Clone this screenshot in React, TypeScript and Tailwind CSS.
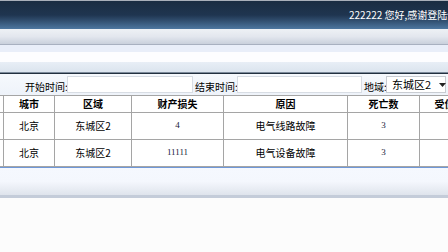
import React from "react";

const font = { fontFamily: '"Noto Sans CJK SC","DejaVu Sans",sans-serif' };

export default function App() {
  const rows = [
    { city: "北京", area: "东城区2", loss: "4", reason: "电气线路故障", dead: "3" },
    { city: "北京", area: "东城区2", loss: "11111", reason: "电气设备故障", dead: "3" },
  ];
  const widths = [25, 51, 77, 92, 124, 72, 60];
  return (
    <div className="w-[448px] h-[252px] overflow-hidden bg-[#fcfcfc] text-[10px] text-black" style={font}>
      {/* top header */}
      <div className="h-[1px] bg-[#a9b0ba]" />
      <div className="h-[28px] bg-gradient-to-b from-[#1a2d42] via-[#1f3550] to-[#4d77a0] flex items-center overflow-hidden">
        <span className="ml-[349px] text-white whitespace-nowrap text-[10px] leading-none">
          222222 您好,感谢登陆使用
        </span>
      </div>
      {/* nav bands */}
      <div className="h-[15px] bg-gradient-to-b from-[#eef1f5] via-[#e3e7ee] to-[#c9d0dc]" />
      <div className="h-[1px] bg-[#a8b0c0]" />
      <div className="h-[7px] bg-[#e9eef9]" />
      <div className="h-[10px] bg-[#fdfdff]" />
      <div className="h-[10px] bg-gradient-to-b from-[#e8eef6] to-[#dbe4ee]" />
      <div className="h-[1px] bg-[#7c8a9a]" />
      <div className="h-[1px] bg-[#22303f]" />
      {/* search row */}
      <div className="h-[21px] bg-gradient-to-b from-[#f6f9fd] to-[#eef3fa] flex items-end pb-[2px] leading-none">
        <span className="ml-[25px] w-[42px] whitespace-nowrap pb-[1px]">开始时间:</span>
        <div className="w-[126px] h-[17px] bg-white border border-[#d8dde4]" />
        <span className="ml-[2px] w-[42px] whitespace-nowrap pb-[1px]">结束时间:</span>
        <div className="w-[125px] h-[17px] bg-white border border-[#d8dde4]" />
        <span className="ml-[2px] w-[22px] whitespace-nowrap pb-[1px]">地域:</span>
        <div className="w-[60px] h-[17px] bg-white border border-[#c8ccd2] flex items-center pl-[5px] whitespace-nowrap text-[11px]">
          东城区2
          <svg width="7" height="4" viewBox="0 0 7 4" className="ml-[8px] shrink-0">
            <path d="M0 0h7L3.5 4z" fill="#222" />
          </svg>
        </div>
      </div>
      {/* table */}
      <div className="bg-white">
        <table className="border-collapse ml-[-22px] table-fixed" style={{ width: 501 }}>
          <colgroup>
            {widths.map((w, i) => (
              <col key={i} style={{ width: w }} />
            ))}
          </colgroup>
          <thead>
            <tr className="h-[17px]">
              {["", "城市", "区域", "财产损失", "原因", "死亡数", "受伤数"].map((h, i) => (
                <th key={i} className="border border-[#a5a5a5] font-bold text-center p-0 leading-none whitespace-nowrap">
                  {h}
                </th>
              ))}
            </tr>
          </thead>
          <tbody>
            {rows.map((r, i) => (
              <tr key={i} className="h-[27px]">
                <td className="border border-[#a5a5a5]" />
                <td className="border border-[#a5a5a5] text-center p-0 leading-none">{r.city}</td>
                <td className="border border-[#a5a5a5] text-center p-0 leading-none">{r.area}</td>
                <td className="border border-[#a5a5a5] text-center p-0 text-[9px] text-[#1a1a3a]" style={{ fontFamily: '"Liberation Serif",serif' }}>{r.loss}</td>
                <td className="border border-[#a5a5a5] text-center p-0 leading-none">{r.reason}</td>
                <td className="border border-[#a5a5a5] text-center p-0 text-[9px] text-[#1a1a3a]" style={{ fontFamily: '"Liberation Serif",serif' }}>{r.dead}</td>
                <td className="border border-[#a5a5a5]" />
              </tr>
            ))}
          </tbody>
        </table>
      </div>
      <div className="h-[1px] bg-[#6f98d8]" />
      <div className="h-[27px] bg-gradient-to-b from-[#f5f8fe] via-[#f4f7fd] to-[#dfe4ec]" />
      <div className="h-[3px] bg-[#c4ccd9]" />
    </div>
  );
}
